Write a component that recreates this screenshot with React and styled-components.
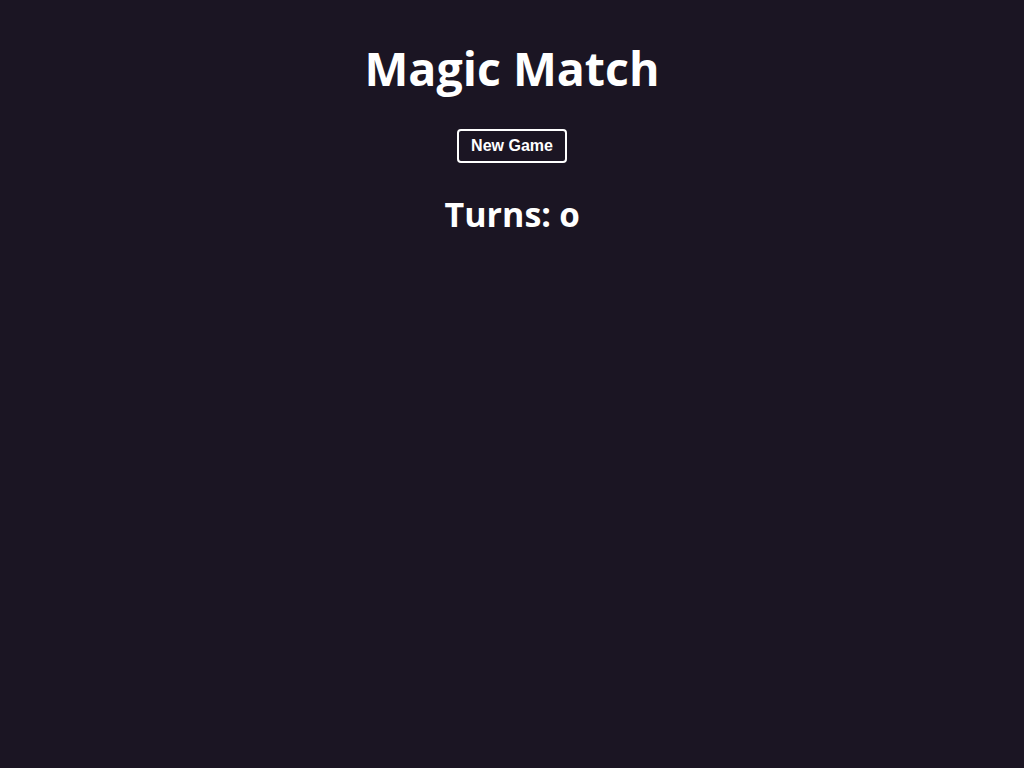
import React, { useState } from "react"
import styled, { createGlobalStyle } from "styled-components"

const GlobalStyle = createGlobalStyle`
  html, body {
    margin: 0;
    padding: 0;
    background: #1b1523;
    color: #fff;
  }
  body {
    font-family: "Open Sans", "Liberation Sans", sans-serif;
    min-height: 100vh;
  }
`

const Page = styled.div`
  max-width: 860px;
  margin: 0 auto;
  padding-top: 40px;
  display: flex;
  flex-direction: column;
  align-items: center;
  text-align: center;
`

const Title = styled.h1`
  margin: 0;
  font-size: 46.5px;
  line-height: 56px;
  font-weight: 700;
`

const NewGameButton = styled.button`
  margin-top: 33px;
  height: 34px;
  background: none;
  border: 2px solid #fff;
  border-radius: 4px;
  padding: 0 12px;
  color: #fff;
  font-family: "Liberation Sans", Arial, sans-serif;
  font-weight: bold;
  font-size: 16px;
  cursor: pointer;
`

const Turns = styled.h2`
  margin: 30px 0 0;
  font-size: 34px;
  line-height: 42px;
  font-weight: 700;
  font-variant-numeric: oldstyle-nums;
`

export default function App() {
  const [turns, setTurns] = useState(0)

  return (
    <>
      <GlobalStyle />
      <Page>
        <Title>Magic Match</Title>
        <NewGameButton onClick={() => setTurns(0)}>New Game</NewGameButton>
        <Turns>Turns: {turns}</Turns>
      </Page>
    </>
  )
}
